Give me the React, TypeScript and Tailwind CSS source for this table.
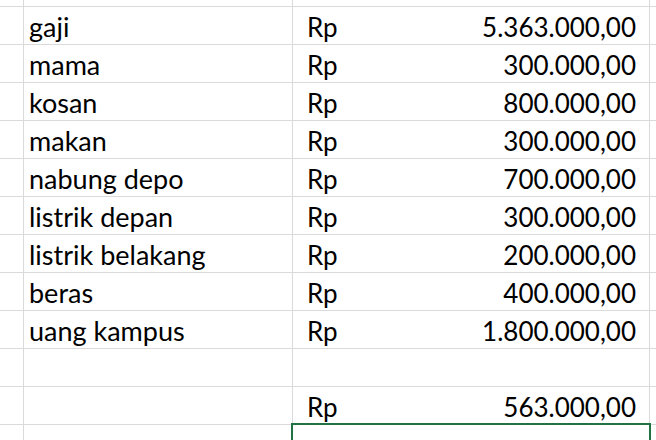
const rows: [string, string, string][] = [
  ["gaji", "Rp", "5.363.000,00"],
  ["mama", "Rp", "300.000,00"],
  ["kosan", "Rp", "800.000,00"],
  ["makan", "Rp", "300.000,00"],
  ["nabung depo", "Rp", "700.000,00"],
  ["listrik depan", "Rp", "300.000,00"],
  ["listrik belakang", "Rp", "200.000,00"],
  ["beras", "Rp", "400.000,00"],
  ["uang kampus", "Rp", "1.800.000,00"],
  ["", "", ""],
  ["", "Rp", "563.000,00"],
]

function Row({ label, cur, amount, h = "h-[38px]", selected = false }: { label: string; cur: string; amount: string; h?: string; selected?: boolean }) {
  return (
    <div className={`grid grid-cols-[24px_269px_357px_1fr] ${h}`}>
      <div className="border-b border-r border-[#dadada]" />
      <div className="flex items-end border-b border-r border-[#dadada] pl-[5px] pb-[4px] text-[27px]">{label}</div>
      <div className="relative flex items-end justify-between border-b border-r border-[#dadada] pl-[14px] pr-[13px] pb-[4px]">
        <span>{cur}</span>
        <span>{amount}</span>
        {selected && <div className="absolute -left-[2px] -top-[2px] h-[40px] w-[360px] border-2 border-[#217346]" />}
      </div>
      <div className="border-b border-[#dadada]" />
    </div>
  )
}

export default function App() {
  return (
    <div className="h-[440px] w-[656px] overflow-hidden bg-white text-[26px] leading-none text-black" style={{ fontFamily: "Lato, 'Liberation Sans', sans-serif" }}>
      <Row label="" cur="" amount="" h="h-[7px]" />
      {rows.map((r, i) => (
        <Row key={i} label={r[0]} cur={r[1]} amount={r[2]} />
      ))}
      <Row label="" cur="" amount="" selected />
    </div>
  )
}
